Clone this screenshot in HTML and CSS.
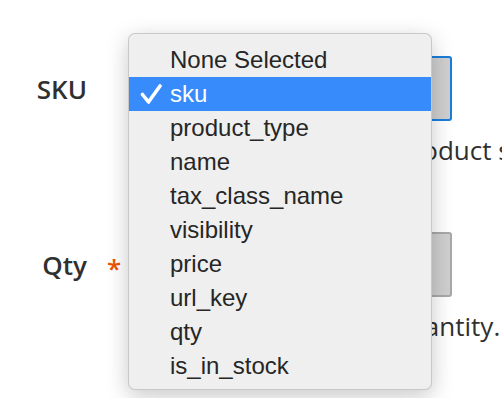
FILE: index.html
```html
<!DOCTYPE html>
<html lang="en">
<head>
  <meta charset="UTF-8">
  <meta name="viewport" content="width=device-width, initial-scale=1.0">
  <title>Field Mapping</title>
  <link rel="stylesheet" href="styles.css">
</head>
<body>
  <div class="form">
    <!-- SKU -->
    <div class="field">
      <div class="label"><span class="label-text">SKU</span><span class="req"></span></div>
      <div class="control">
        <div class="select is-focused"></div>
        <div class="note">Input column for the product sku.</div>
      </div>
    </div>

    <!-- Qty -->
    <div class="field field-qty">
      <div class="label"><span class="label-text">Qty</span><span class="req">*</span></div>
      <div class="control">
        <div class="select"></div>
        <div class="note">Value of the product quantity.</div>
      </div>
    </div>
  </div>

  <!-- Open dropdown of the SKU select -->
  <ul class="menu">
    <li>None Selected</li>
    <li class="selected">
      <svg class="check" width="22" height="20" viewBox="0 0 22 20">
        <path d="M2.5 10.5 L8.5 18 L20 2" fill="none" stroke="#fff" stroke-width="3.6" stroke-linecap="round" stroke-linejoin="round"/>
      </svg>
      sku
    </li>
    <li>product_type</li>
    <li>name</li>
    <li>tax_class_name</li>
    <li>visibility</li>
    <li>price</li>
    <li>url_key</li>
    <li>qty</li>
    <li>is_in_stock</li>
  </ul>
</body>
</html>
```

FILE: styles.css
```css
* {
  margin: 0;
  padding: 0;
  box-sizing: border-box;
}

body {
  font-family: "Open Sans", Arial, sans-serif;
  background-color: #fff;
  color: #303030;
  width: 502px;
  height: 398px;
  overflow: hidden;
  position: relative;
}

.form {
  padding-top: 56px;
  width: 900px;
}

.field {
  display: flex;
}

.field-qty {
  margin-top: 69px;
}

.label {
  display: flex;
  align-items: center;
  height: 65px;
  width: 139px;
}

.label-text {
  width: 87px;
  text-align: right;
  font-size: 26px;
  font-weight: 600;
}

.req {
  padding-left: 20px;
  color: #eb5202;
  font-size: 26px;
  font-weight: 600;
  padding-top: 6px;
}

.control {
  width: 313px;
}

.select {
  height: 65px;
  border: 2px solid #a8a8a8;
  border-radius: 0 3px 3px 0;
  background: linear-gradient(to right, #d6d6d6, #cfcfcf);
}

.select.is-focused {
  border-color: #1a7ddb;
}

.note {
  margin-top: 16px;
  font-size: 26px;
  line-height: 26px;
  white-space: nowrap;
}

/* Dropdown menu */
.menu {
  position: absolute;
  left: 128px;
  top: 33px;
  width: 304px;
  height: 357px;
  padding: 9px 0 8px;
  list-style: none;
  background-color: #efefef;
  border: 1px solid rgba(0, 0, 0, 0.16);
  border-radius: 7px;
  box-shadow: 0 6px 22px rgba(0, 0, 0, 0.22);
  font-family: "Liberation Sans", Arial, sans-serif;
  font-size: 24px;
  color: #262626;
}

.menu li {
  position: relative;
  height: 34px;
  line-height: 34px;
  padding-left: 41px;
}

.menu li.selected {
  background-color: #388bfa;
  color: #fff;
}

.check {
  position: absolute;
  left: 11px;
  top: 7px;
}
```
